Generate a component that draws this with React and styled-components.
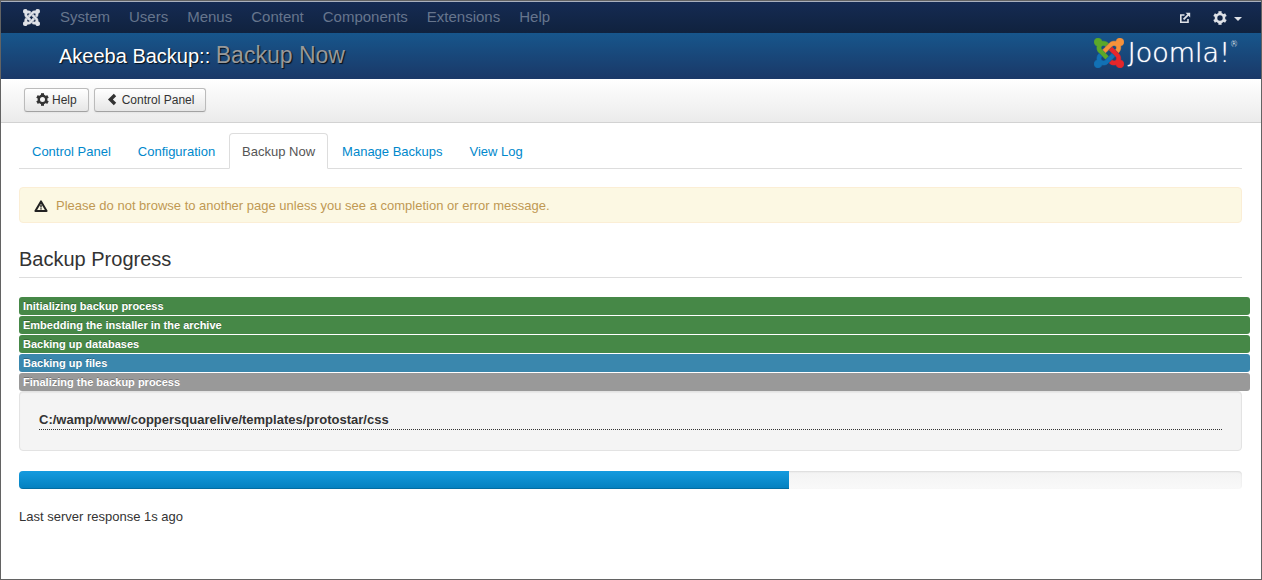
import React from 'react'
import styled, { createGlobalStyle } from 'styled-components'

const GlobalStyle = createGlobalStyle`
  * {
    box-sizing: border-box;
  }
  body {
    margin: 0;
    background: #fff;
    color: #333;
    font: 13px/18px "Liberation Sans", Arial, sans-serif;
  }
`

const PageCss = styled.div`
  min-height: 100vh;
  border: 1px solid #636363;
`

const NavbarCss = styled.nav`
  display: flex;
  align-items: center;
  height: 32px;
  padding: 0 19px 0 22px;
  border-top: 1px solid #a9b0bd;
  background: linear-gradient(#152b53, #10223e);
`

const NavLinkCss = styled.a`
  margin-left: 19px;
  padding-bottom: 1px;
  font-size: 15px;
  line-height: 30px;
  color: #66758d;
  text-decoration: none;
  &:hover {
    color: #fff;
  }
`

const BrandCss = styled.a`
  display: flex;
  margin-right: 1px;
`

const NavRightCss = styled.div`
  display: flex;
  align-items: center;
  gap: 22px;
  margin-left: auto;
`

const IconButtonCss = styled.button`
  display: flex;
  align-items: center;
  gap: 7px;
  padding: 0;
  border: 0;
  background: none;
  color: #dfe2e7;
  cursor: pointer;
`

const HeaderCss = styled.header`
  display: flex;
  align-items: center;
  justify-content: space-between;
  height: 46px;
  padding: 0 23px 0 58px;
  background: linear-gradient(#17568c, #1a3867);
  color: #fff;
`

const TitleCss = styled.h1`
  margin: 0;
  padding-bottom: 2px;
  font-size: 20px;
  font-weight: normal;
  line-height: 42px;
  text-shadow: 1px 1px 1px rgba(0, 0, 0, 0.8);
`

const SubtitleCss = styled.small`
  font-size: 23px;
  color: #999;
`

const LogoCss = styled.div`
  display: flex;
  align-items: center;
  gap: 4px;
  padding-bottom: 6px;
  font: 200 27px/36px "DejaVu Sans", sans-serif;
  text-shadow: 0 0 1px #fff;
  sup {
    align-self: flex-start;
    margin-left: -4px;
    font-size: 8px;
    line-height: 20px;
    text-shadow: none;
  }
`

const SubheadCss = styled.div`
  display: flex;
  gap: 5px;
  height: 44px;
  padding: 9px 23px;
  border-bottom: 1px solid #d2d2d2;
  background: linear-gradient(#fff, #ebebeb);
`

const ButtonCss = styled.button`
  display: flex;
  align-items: center;
  gap: 3px;
  height: 24px;
  padding: 0 11px 1px;
  border: 1px solid #bbb;
  border-bottom-color: #a2a2a2;
  border-radius: 3px;
  background: linear-gradient(#fff, #e6e6e6);
  box-shadow: 0 1px 2px rgba(0, 0, 0, 0.05);
  color: #333;
  font: 12px/16px "Liberation Sans", Arial, sans-serif;
  cursor: pointer;
`

const ContentCss = styled.main`
  padding: 10px 19px 20px 18px;
`

const TabsCss = styled.ul`
  display: flex;
  gap: 1px;
  margin: 0 0 18px;
  padding: 0;
  border-bottom: 1px solid #ddd;
  list-style: none;
`

const TabCss = styled.a`
  display: block;
  margin-bottom: -1px;
  padding: 9px 12px 7px;
  border: 1px solid ${props => props.$active ? '#ddd' : 'transparent'};
  border-bottom-color: ${props => props.$active ? '#fff' : 'transparent'};
  border-radius: 4px 4px 0 0;
  background: ${props => props.$active ? '#fff' : 'transparent'};
  color: ${props => props.$active ? '#555' : '#08c'};
  text-decoration: none;
`

const AlertCss = styled.div`
  display: flex;
  align-items: center;
  gap: 8px;
  padding: 9px 14px 7px;
  border: 1px solid #fbeed5;
  border-radius: 4px;
  background: #fcf8e3;
  color: #c09853;
`

const HeadingCss = styled.h3`
  margin: 18px 0 19px;
  border-bottom: 1px solid #ddd;
  font-size: 20px;
  font-weight: normal;
  line-height: 36px;
`

const StepsCss = styled.div`
  display: flex;
  flex-direction: column;
  gap: 1px;
  margin-right: -8px;
`

const stepColors = {
  done: '#468847',
  active: '#3a87ad',
  waiting: '#999',
}

const StepCss = styled.div`
  padding: 2px 4px;
  border-radius: 3px;
  background: ${props => stepColors[props.$status]};
  color: #fff;
  font-size: 11px;
  font-weight: bold;
  line-height: 14px;
  text-shadow: 0 -1px 0 rgba(0, 0, 0, 0.25);
`

const WellCss = styled.div`
  margin-bottom: 20px;
  padding: 19px 19px 20px;
  border: 1px solid #e3e3e3;
  border-radius: 4px;
  background: #f4f4f4;
  box-shadow: inset 0 1px 1px rgba(0, 0, 0, 0.05);
`

const FolderCss = styled.div`
  border-bottom: 1px dotted #333;
  font-weight: bold;
`

const ProgressCss = styled.div`
  height: 18px;
  margin-bottom: 19px;
  border-radius: 4px;
  overflow: hidden;
  background: linear-gradient(#f3f3f3, #f9f9f9);
  box-shadow: inset 0 1px 2px rgba(0, 0, 0, 0.1);
`

const BarCss = styled.div`
  height: 100%;
  background: linear-gradient(#149bdf, #0480be);
  box-shadow: inset 0 -1px 0 rgba(0, 0, 0, 0.15);
`

const arms = [
  { color: '#5ba829', d: 'M.6 92.1C.6 58.8 27.4 32 60.4 32c30 0 54.5 21.9 59.2 50.2 32.6-7.6 67.1.6 96.5 30l-44.3 44.3c-20.5-20.5-42.6-16.3-55.4-3.5-14.3 14.3-14.3 37.9 0 52.2l99.5 99.5-44 44.3c-87.7-87.2-49.7-49.7-99.8-99.7-26.8-26.5-35-64.8-24.8-98.9C20.4 144.6.6 120.7.6 92.1z' },
  { color: '#f7923a', d: 'M130.1 208.5l44.3 44.3c10-10 89.7-89.7 99.7-99.8 14.3-14.3 37.6-14.3 51.9 0 12.8 12.8 17 35-3.5 55.4l44 44.3c31.2-31.2 38.5-67.6 28.9-101.2 29.2-4.1 51.9-29.2 51.9-59.5 0-33.2-26.8-60.1-59.8-60.1-30.3 0-55.4 22.5-59.5 51.6-33.8-9.9-71.7-1.5-98.3 25.1-18.3 19.1-71.1 71.5-99.6 99.9z' },
  { color: '#e6262b', d: 'M396.4 360.7c8.2-32.7-.9-68.5-26.3-93.9-11.8-12.2 5 4.7-99.5-99.7l-44.3 44.3 99.7 99.7c14.3 14.3 14.3 37.6 0 51.9-12.8 12.8-35 17-55.4-3.5l-44 44.3c27.6 30.2 68 38.8 102.7 28 5.5 27.4 29.7 48.1 58.9 48.1 33 0 59.8-26.8 59.8-60.1 0-30.2-22.5-55-51.6-59.1z' },
  { color: '#1271b5', d: 'M312.1 307.6l-44-44.3c-87 86.4-50.4 50.4-99.7 99.8-14.3 14.3-37.6 14.3-51.9 0-13.1-13.4-16.9-35.3 3.2-55.4l-44-44.3c-30.2 30.2-38 65.2-29.5 98.3-26.7 6-46.2 29.9-46.2 58.2C0 453.2 26.8 480 59.8 480c28.6 0 52.5-19.8 58.6-46.7 32.7 8.2 68.5-.6 94.2-26 32.1-32 12.2-12.4 99.5-99.7z' },
]

const JoomlaMark = ({ size, color }) => (
  <svg width={size} height={size} viewBox="0 32 448 448" aria-hidden="true">
    {arms.map(arm => (
      <path
        key={arm.color}
        d={arm.d}
        fill={color || arm.color}
        stroke={color || arm.color}
        strokeWidth={color ? 12 : 8}
      />
    ))}
  </svg>
)

const GearIcon = ({ size }) => (
  <svg width={size} height={size} viewBox="0 0 14 14" fill="none" stroke="currentColor" aria-hidden="true">
    <circle cx="7" cy="7" r="4" strokeWidth="2.6" />
    {[0, 60, 120, 180, 240, 300].map(angle => (
      <path key={angle} d="M7 0.2v2.4" strokeWidth="3.2" transform={`rotate(${angle} 7 7)`} />
    ))}
  </svg>
)

const ChevronIcon = () => (
  <svg width="13" height="13" viewBox="0 0 13 13" aria-hidden="true">
    <path d="M9 2L4.4 6.5 9 11" fill="none" stroke="currentColor" strokeWidth="3.4" />
  </svg>
)

const CaretIcon = () => (
  <svg width="8" height="8" viewBox="0 0 8 8" aria-hidden="true">
    <path d="M0 3h8L4 7z" fill="currentColor" />
  </svg>
)

const ExternalIcon = () => (
  <svg width="12" height="12" viewBox="0 0 12 12" fill="none" stroke="currentColor" aria-hidden="true">
    <path d="M5.5 3H1.8v7.2H9V7" strokeWidth="1.6" />
    <path d="M4.6 7.4L9.6 2.4" strokeWidth="1.8" />
    <path d="M6.6 0.8H11.2V5.4z" fill="currentColor" stroke="none" />
  </svg>
)

const WarningIcon = () => (
  <svg width="14" height="12" viewBox="0 0 14 12" aria-hidden="true">
    <path d="M7 1.4L12.6 11H1.4z" fill="none" stroke="#222" strokeWidth="2" strokeLinejoin="round" />
    <path d="M7 4.4v3M7 8.2v1.4" stroke="#222" strokeWidth="1.4" />
  </svg>
)

const menus = ['System', 'Users', 'Menus', 'Content', 'Components', 'Extensions', 'Help']

const tabs = ['Control Panel', 'Configuration', 'Backup Now', 'Manage Backups', 'View Log']

const steps = [
  { title: 'Initializing backup process', status: 'done' },
  { title: 'Embedding the installer in the archive', status: 'done' },
  { title: 'Backing up databases', status: 'done' },
  { title: 'Backing up files', status: 'active' },
  { title: 'Finalizing the backup process', status: 'waiting' },
]

export default class App extends React.Component {
  constructor(props) {
    super(props)
    this.state = { tab: 'Backup Now', percent: 63 }
  }
  render() {
    return (
      <PageCss>
        <GlobalStyle />
        <NavbarCss>
          <BrandCss href="#" aria-label="Joomla"><JoomlaMark size={17} color="#dfe2e7" /></BrandCss>
          {menus.map(menu => <NavLinkCss key={menu} href="#">{menu}</NavLinkCss>)}
          <NavRightCss>
            <IconButtonCss aria-label="View site"><ExternalIcon /></IconButtonCss>
            <IconButtonCss aria-label="Settings"><GearIcon size={14} /><CaretIcon /></IconButtonCss>
          </NavRightCss>
        </NavbarCss>
        <HeaderCss>
          <TitleCss>Akeeba Backup:: <SubtitleCss>Backup Now</SubtitleCss></TitleCss>
          <LogoCss><JoomlaMark size={30} />Joomla!<sup>®</sup></LogoCss>
        </HeaderCss>
        <SubheadCss>
          <ButtonCss><GearIcon size={13} />Help</ButtonCss>
          <ButtonCss><ChevronIcon />Control Panel</ButtonCss>
        </SubheadCss>
        <ContentCss>
          <TabsCss>
            {tabs.map(tab => (
              <li key={tab}>
                <TabCss href="#" $active={tab === this.state.tab} onClick={() => this.setState({ tab })}>{tab}</TabCss>
              </li>
            ))}
          </TabsCss>
          <AlertCss role="alert">
            <WarningIcon />
            Please do not browse to another page unless you see a completion or error message.
          </AlertCss>
          <HeadingCss>Backup Progress</HeadingCss>
          <StepsCss>
            {steps.map(step => <StepCss key={step.title} $status={step.status}>{step.title}</StepCss>)}
          </StepsCss>
          <WellCss>
            <FolderCss>C:/wamp/www/coppersquarelive/templates/protostar/css</FolderCss>
          </WellCss>
          <ProgressCss role="progressbar" aria-label="Backup progress" aria-valuenow={this.state.percent}>
            <BarCss style={{ width: `${this.state.percent}%` }} />
          </ProgressCss>
          <div>Last server response 1s ago</div>
        </ContentCss>
      </PageCss>
    )
  }
}
